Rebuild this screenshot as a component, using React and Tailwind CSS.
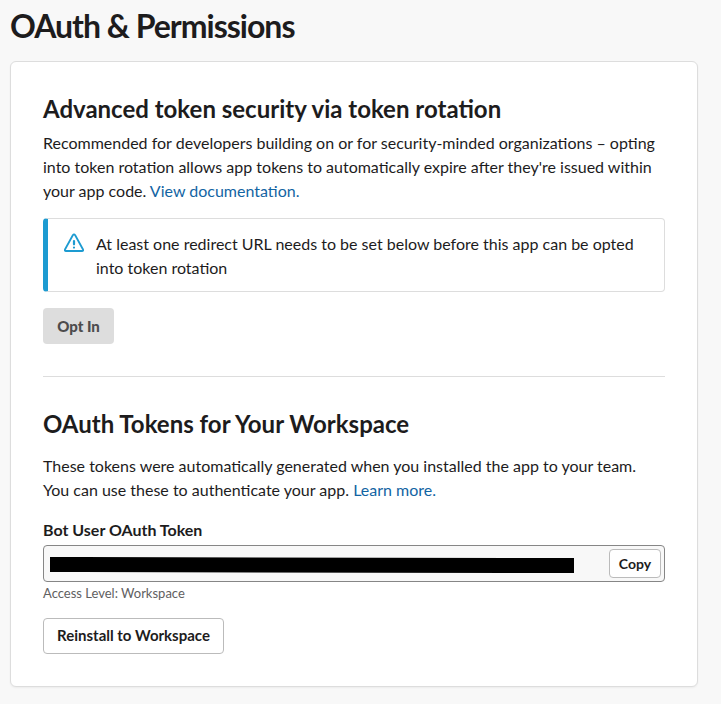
export default function App() {
  return (
    <main className="h-[704px] w-[721px] overflow-hidden bg-[#f8f8f8] pl-[10px] pt-[7px] font-[Lato,sans-serif] text-base leading-6 text-[#1d1c1d]">
      <h1 className="h-[54px] text-[32px] font-bold leading-[38px] tracking-[-1px]">OAuth &amp; Permissions</h1>
      <section className="h-[626px] w-[688px] rounded-md border border-[#dddddd] bg-white px-8 pt-8 shadow-xs">
        <h2 className="text-[24px] font-bold leading-[30px]">Advanced token security via token rotation</h2>
        <p className="mt-[7px] whitespace-nowrap">
          Recommended for developers building on or for security-minded organizations – opting<br />
          into token rotation allows app tokens to automatically expire after they're issued within<br />
          your app code. <a className="text-[#1264a3]">View documentation.</a>
        </p>
        <div className="mt-[15px] flex h-[74px] rounded border border-l-[5px] border-[#dddddd] border-l-[#1d9bd1] pl-4 pt-[13px]">
          <svg className="mt-[1px] h-5 w-5" viewBox="0 0 20 20" fill="none" stroke="#1d9bd1" strokeWidth="1.8" strokeLinecap="round" strokeLinejoin="round">
            <path d="M8.8 2.3 1.1 16.2Q.3 18 2 18H18Q19.7 18 18.9 16.2L11.2 2.3Q10 .5 8.8 2.3Z" />
            <path d="M10 8v3.3M10 14.5v.1" strokeWidth="2.2" />
          </svg>
          <p className="ml-3 whitespace-nowrap">At least one redirect URL needs to be set below before this app can be opted<br />into token rotation</p>
        </div>
        <button className="mt-4 block h-9 w-[71px] rounded bg-[#dddddd] text-[15px] font-black text-[#4d4c4d]">Opt In</button>
        <hr className="mt-8 border-[#dddddd]" />
        <h2 className="mt-8 text-[24px] font-bold leading-[30px]">OAuth Tokens for Your Workspace</h2>
        <p className="mt-[15px] whitespace-nowrap">
          These tokens were automatically generated when you installed the app to your team.<br />
          You can use these to authenticate your app. <a className="text-[#1264a3]">Learn more.</a>
        </p>
        <h3 className="mt-4 font-bold">Bot User OAuth Token</h3>
        <div className="mt-[3px] flex h-[37px] items-center justify-between rounded border border-[#868686] bg-[#f8f8f8] pl-[6px] pr-[3px]">
          <svg className="mt-[3px] h-4 w-[524px]" viewBox="0 0 524 16">
            <path d="M0 0H31L462 1H524V16H462L31 15H0Z" />
          </svg>
          <button className="h-[29px] w-[52px] rounded border border-[#bbbbbb] bg-white text-sm font-bold">Copy</button>
        </div>
        <p className="-mt-px text-[13px] leading-6 text-[#616061]">Access Level: Workspace</p>
        <button className="mt-[13px] block h-9 w-[181px] rounded border border-[#bbbbbb] bg-white pb-0.5 text-[15px] font-bold">Reinstall to Workspace</button>
      </section>
    </main>
  );
}
